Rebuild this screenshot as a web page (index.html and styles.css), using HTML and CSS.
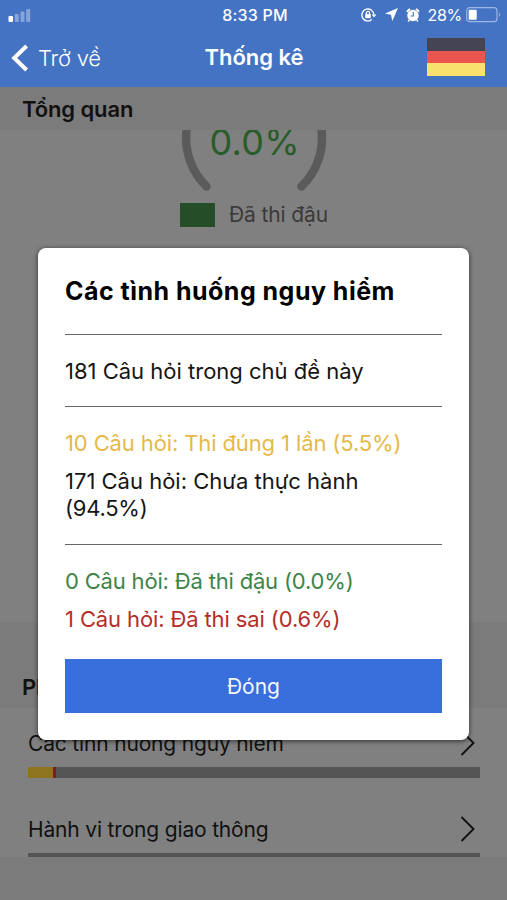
FILE: index.html
```html
<!DOCTYPE html>
<html lang="vi">
<head>
<meta charset="utf-8">
<title>Thống kê</title>
<link rel="stylesheet" href="styles.css">
</head>
<body>
<div class="app">
  <header class="top">
    <div class="status">
      <svg class="signal" width="24" height="14" viewBox="0 0 24 14" fill="#fff"><rect x="0.5" y="8" width="4.5" height="6" rx="1"/><g opacity=".35"><rect x="6.8" y="6" width="4" height="8" rx="1"/><rect x="12.5" y="3.5" width="4" height="10.5" rx="1"/><rect x="18.2" y="1" width="4" height="13" rx="1"/></g></svg>
      <span class="clock">8:33 PM</span>
      <div class="indicators">
        <svg width="16" height="14" viewBox="0 0 16 14" fill="none" stroke="#fff" stroke-width="1.3"><path d="M10.8 11.6A6 6 0 1 1 12.9 6.8"/><path d="M10.7 6.6h4.6l-2.3 3z" fill="#fff" stroke="none"/><rect x="4.2" y="6.2" width="5.6" height="4" fill="#fff" stroke="none"/><path d="M5.4 6.5V5a1.6 1.6 0 0 1 3.2 0v1.500"/></svg>
        <svg width="13" height="13" viewBox="0 0 13 13" fill="#fff"><path d="M13 0 7.300 13 6 6.800 0 5.600z"/></svg>
        <svg width="14" height="14" viewBox="0 0 14 14"><circle cx="7" cy="7.500" r="5.700" fill="#fff"/><path d="M.9 3.700 3.900.9M13.100 3.700 10.100.9" stroke="#fff" stroke-width="1.900"/><path d="M7.300 4v4H4.600" fill="none" stroke="#4573c4" stroke-width="1.100"/><path d="M3.200 12 2.200 13.500M10.800 12l1 1.500" stroke="#fff" stroke-width="1.500"/></svg>
        <span class="percent">28%</span>
        <svg class="battery" width="36" height="16" viewBox="0 0 36 16"><rect x=".7" y=".7" width="30.300" height="14" rx="3" fill="none" stroke="#9db7e3" stroke-width="1.200"/><rect x="2.700" y="2.800" width="8" height="10" rx="1" fill="#fff"/><path d="M33 5.500q2.200 2.200 0 4.400z" fill="#9db7e3"/></svg>
      </div>
    </div>
    <div class="nav">
      <div class="back"><svg width="18" height="30" viewBox="0 0 18 30"><path d="M15.600 3 3.200 15l12.400 12" fill="none" stroke="#fff" stroke-width="4"/></svg><span class="back-text">Trở về</span></div>
      <span class="title">Thống kê</span>
      <div class="flag"><i class="black"></i><i class="red"></i><i class="gold"></i></div>
    </div>
  </header>
  <main class="content">
    <h2 class="section overview"><span>Tổng quan</span></h2>
    <section class="chart">
      <svg class="ring" width="150" height="64" viewBox="179 130 150 64"><path d="M206.500 186.500A67.600 67.600 0 0 1 186.600 130V100H321.500V130A67.600 67.600 0 0 1 301.500 186.500" fill="none" stroke="#5b5b5b" stroke-width="8.500" stroke-linecap="round"/><text class="ring-value" x="209.500" y="154.500">0.0%</text></svg>
      <div class="legend"><i class="swatch"></i><span>Đã thi đậu</span></div>
    </section>
    <h2 class="section topics"><span>Phân loại</span></h2>
    <section class="list">
      <div class="item"><span>Các tình huống nguy hiểm</span><svg width="16" height="28" viewBox="0 0 16 28"><path d="M1.500 2 13.500 14 1.500 26" fill="none" stroke="#111" stroke-width="1.900"/></svg></div>
      <div class="bar thick"><i class="once"></i><i class="wrong"></i></div>
      <div class="item second"><span>Hành vi trong giao thông</span><svg width="16" height="28" viewBox="0 0 16 28"><path d="M1.500 2 13.500 14 1.500 26" fill="none" stroke="#111" stroke-width="1.900"/></svg></div>
      <div class="bar thin"></div>
    </section>
  </main>
  <div class="dialog">
    <h1><span>Các tình huống nguy hiểm</span></h1>
    <div class="group total"><p>181 Câu hỏi trong chủ đề này</p></div>
    <div class="group practice"><p class="yellow">10 Câu hỏi: Thi đúng 1 lần (5.5%)</p><p>171 Câu hỏi: Chưa thực hành<br><span class="share">(94.5%)</span></p></div>
    <div class="group exam"><p class="green">0 Câu hỏi: Đã thi đậu (0.0%)</p><p class="fail">1 Câu hỏi: Đã thi sai (0.6%)</p></div>
    <button class="close"><span>Đóng</span></button>
  </div>
</div>
</body>
</html>
```
FILE: styles.css
```css
* { box-sizing: border-box; }
body { margin: 0; font-family: Inter, "Liberation Sans", sans-serif; }
h1, h2, p { margin: 0; }
i { display: block; }
svg { display: block; flex: none; }
span { white-space: nowrap; }
.app { position: relative; width: 507px; height: 900px; overflow: hidden; background: #7b7b7b; display: flex; flex-direction: column; }
.top { height: 87px; background: #4573c4; color: #fff; flex: none; }
.status { height: 29px; display: grid; grid-template-columns: 1fr auto 1fr; align-items: center; padding: 0 5px 0 8px; }
.clock { font-size: 16px; font-weight: 500; letter-spacing: .2px; padding-top: 1px; }
.indicators { display: flex; justify-content: flex-end; align-items: center; gap: 8px; }
.percent { font-size: 16px; letter-spacing: -.3px; }
.battery { margin-left: -4px; }
.nav { height: 56px; display: grid; grid-template-columns: 1fr auto 1fr; align-items: center; padding: 0 22px 0 11px; }
.back { display: flex; align-items: center; gap: 9px; padding-top: 1px; }
.back-text { font-size: 22px; font-weight: 300; letter-spacing: -.2px; }
.title { font-size: 22px; font-weight: 600; margin: 0 -6px 0 6px; }
.flag { justify-self: end; width: 58px; height: 38px; display: grid; grid-template-rows: repeat(3, 1fr); }
.black { background: #454452; }
.red { background: #eb5550; }
.gold { background: #f9e16d; }
.content { flex: 1; display: flex; flex-direction: column; }
.section { background: #7b7b7b; color: #111; font-size: 22px; font-weight: 600; letter-spacing: -.1px; padding-left: 22px; display: flex; align-items: center; }
.overview { height: 43px; }
.topics { height: 86px; padding-top: 44px; }
.chart { height: 492px; background: #808080; display: flex; flex-direction: column; align-items: center; }
.ring { margin-left: 1px; }
.ring-value { font-size: 36px; letter-spacing: .3px; fill: #285c2b; }
.legend { display: flex; align-items: center; gap: 14px; margin: 8px 0 0 1px; height: 25px; font-size: 21px; letter-spacing: -.1px; color: #3a3a3a; }
.swatch { width: 35px; height: 24px; background: #254d27; }
.list { height: 149px; background: #808080; padding: 21px 27px 0 28px; }
.item { height: 28px; display: flex; justify-content: space-between; align-items: center; font-size: 21px; letter-spacing: -.17px; color: #111; padding-right: 4px; }
.second { margin-top: 37px; }
.bar { background: #555; display: flex; }
.thick { margin-top: 10px; height: 11px; }
.once { width: 25px; background: #8f741f; }
.wrong { width: 3px; background: #7b201b; }
.thin { margin-top: 10px; height: 4px; }
.dialog { position: absolute; left: 38px; top: 248px; width: 431px; height: 492px; padding: 0 27px; background: #fff; border-radius: 8px; box-shadow: 0 1px 5px rgba(0, 0, 0, .65); color: #151515; font-size: 22px; line-height: 27px; }
.dialog h1 { height: 86px; padding-top: 30px; font-size: 25px; font-weight: 700; letter-spacing: .48px; color: #000; }
.group { border-top: 1.500px solid #666; }
.total { height: 72px; padding-top: 23px; }
.practice { height: 138px; padding-top: 23px; }
.exam { height: 115px; padding-top: 22.500px; }
.group p + p { margin-top: 11px; }
.yellow { color: #e5b94a; letter-spacing: -.12px; }
.share { letter-spacing: -.25px; }
.green { color: #3d8448; letter-spacing: -.18px; }
.fail { color: #b52d28; letter-spacing: -.12px; }
.close { display: block; width: 377px; height: 54px; border: 0; padding: 0; background: #386fdd; color: #f3f8ff; font: 21px Inter, sans-serif; }
```
